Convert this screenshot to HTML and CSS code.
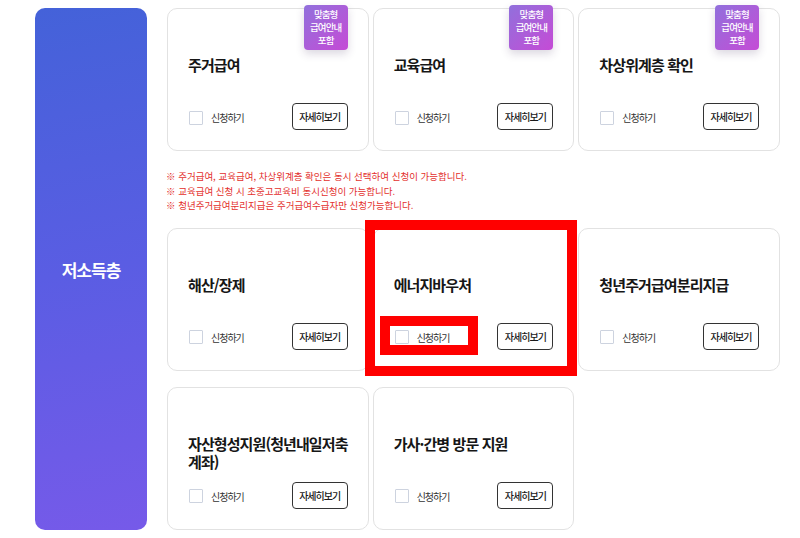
FILE: index.html
```html
<!DOCTYPE html>
<html lang="ko">
<head>
  <meta charset="UTF-8">
  <title>저소득층 서비스 선택</title>
  <link rel="stylesheet" href="styles.css">
</head>
<body>

<div class="service-section">
  <!-- 대상 구분 -->
  <div class="section-label">저소득층</div>

  <div class="section-body">
    <div class="card-grid">
      <div class="service-card">
        <span class="badge">맞춤형<br>급여안내<br>포함</span>
        <h3 class="card-title">주거급여</h3>
        <div class="card-foot">
          <label class="apply"><span class="check"></span>신청하기</label>
          <button class="detail-btn">자세히보기</button>
        </div>
      </div>
      <div class="service-card">
        <span class="badge">맞춤형<br>급여안내<br>포함</span>
        <h3 class="card-title">교육급여</h3>
        <div class="card-foot">
          <label class="apply"><span class="check"></span>신청하기</label>
          <button class="detail-btn">자세히보기</button>
        </div>
      </div>
      <div class="service-card">
        <span class="badge">맞춤형<br>급여안내<br>포함</span>
        <h3 class="card-title">차상위계층 확인</h3>
        <div class="card-foot">
          <label class="apply"><span class="check"></span>신청하기</label>
          <button class="detail-btn">자세히보기</button>
        </div>
      </div>
    </div>

    <ul class="notes">
      <li>※ 주거급여, 교육급여, 차상위계층 확인은 동시 선택하여 신청이 가능합니다.</li>
      <li>※ 교육급여 신청 시 초중고교육비 동시신청이 가능합니다.</li>
      <li>※ 청년주거급여분리지급은 주거급여수급자만 신청가능합니다.</li>
    </ul>

    <div class="card-grid rows">
      <div class="service-card">
        <h3 class="card-title">해산/장제</h3>
        <div class="card-foot">
          <label class="apply"><span class="check"></span>신청하기</label>
          <button class="detail-btn">자세히보기</button>
        </div>
      </div>
      <div class="service-card">
        <h3 class="card-title">에너지바우처</h3>
        <div class="card-foot">
          <label class="apply"><span class="check"></span>신청하기</label>
          <button class="detail-btn">자세히보기</button>
        </div>
        <!-- 강조 표시 -->
        <span class="mark mark-card"></span>
        <span class="mark mark-apply"></span>
      </div>
      <div class="service-card">
        <h3 class="card-title">청년주거급여분리지급</h3>
        <div class="card-foot">
          <label class="apply"><span class="check"></span>신청하기</label>
          <button class="detail-btn">자세히보기</button>
        </div>
      </div>
      <div class="service-card">
        <h3 class="card-title">자산형성지원(청년내일저축<br>계좌)</h3>
        <div class="card-foot">
          <label class="apply"><span class="check"></span>신청하기</label>
          <button class="detail-btn">자세히보기</button>
        </div>
      </div>
      <div class="service-card">
        <h3 class="card-title">가사·간병 방문 지원</h3>
        <div class="card-foot">
          <label class="apply"><span class="check"></span>신청하기</label>
          <button class="detail-btn">자세히보기</button>
        </div>
      </div>
    </div>
  </div>
</div>

</body>
</html>
```

FILE: styles.css
```css
* { box-sizing: border-box; margin: 0; padding: 0; }

body {
  background: #fff;
  font-family: "Noto Sans CJK KR", "Noto Sans", sans-serif;
  color: #222;
}

.service-section {
  display: flex;
  gap: 20px;
  padding: 8px 20px 9px 35px;
}

.section-label {
  width: 112px;
  flex-shrink: 0;
  border-radius: 10px;
  background: linear-gradient(170deg, #4462d9 0%, #5a5de3 50%, #765ae9 100%);
  color: #fff;
  font-size: 17px;
  font-weight: 700;
  letter-spacing: -1px;
  display: flex;
  align-items: center;
  justify-content: center;
  padding-top: 2px;
}

.section-body {
  flex: 1;
  min-width: 0;
}

.card-grid {
  display: grid;
  grid-template-columns: repeat(3, 1fr);
  column-gap: 4px;
}

.card-grid.rows {
  row-gap: 16px;
}

.service-card {
  position: relative;
  height: 143px;
  border: 1px solid #e2e2e2;
  border-radius: 10px;
  background: #fff;
  padding: 47px 20px 20px;
  display: flex;
  flex-direction: column;
}

.card-title {
  font-size: 15px;
  font-weight: 700;
  line-height: 18px;
  letter-spacing: -0.9px;
  color: #161616;
  margin-right: -16px;
  white-space: nowrap;
}

.card-foot {
  margin-top: auto;
  display: flex;
  align-items: center;
  justify-content: space-between;
}

.apply {
  display: flex;
  align-items: center;
  font-size: 10px;
  letter-spacing: -1px;
  color: #333;
  padding-top: 2px;
}

.check {
  width: 14px;
  height: 14px;
  border: 1px solid #cdd3df;
  border-radius: 1px;
  margin: 0 8px 0 1px;
}

.detail-btn {
  width: 56px;
  height: 27px;
  border: 1px solid #333;
  border-radius: 4px;
  background: #fff;
  font-family: inherit;
  font-size: 10px;
  font-weight: 500;
  letter-spacing: -1px;
  color: #1a1a1a;
}

.badge {
  position: absolute;
  top: -4px;
  right: 20px;
  width: 44px;
  height: 45px;
  border-radius: 4px;
  background: linear-gradient(135deg, #9170dc 0%, #b15ad8 60%, #c54bd6 100%);
  box-shadow: 0 4px 8px rgba(60, 40, 90, 0.18);
  color: #fff;
  font-size: 9.5px;
  font-weight: 500;
  line-height: 13px;
  letter-spacing: -0.9px;
  text-align: center;
  padding-top: 3px;
}

.notes {
  list-style: none;
  padding: 18px 0 15px;
  margin-left: -1px;
  font-size: 9.5px;
  line-height: 14.5px;
  color: #e3302c;
}

/* red highlight frames */
.mark {
  position: absolute;
  border: 10px solid #f00;
  pointer-events: none;
}

.mark-card {
  top: -9px;
  left: -9px;
  right: -4px;
  bottom: -6px;
}

.mark-apply {
  top: 87px;
  left: 6px;
  width: 98px;
  height: 39px;
}
```
